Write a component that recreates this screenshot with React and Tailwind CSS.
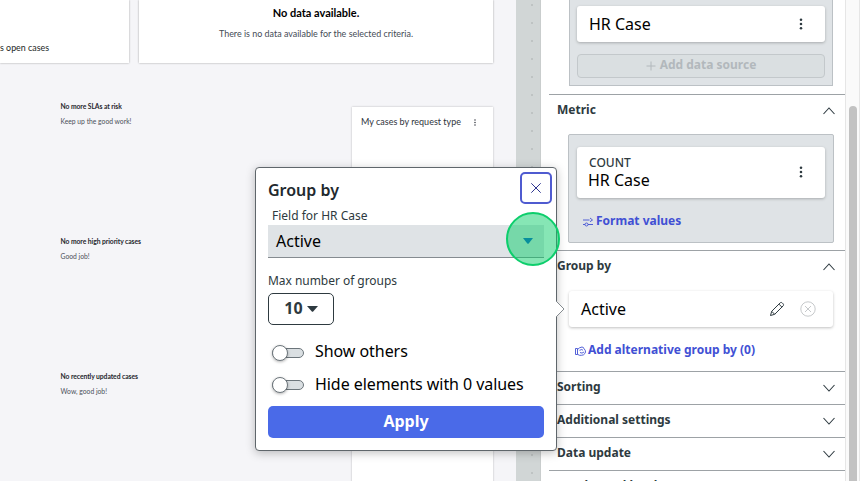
import React from "react";

const LATO = "font-[Lato,sans-serif]";

function Dots({ className }) {
  return (
    <svg viewBox="0 0 4 14" className={className} fill="currentColor">
      <circle cx="2" cy="2" r="1.5" />
      <circle cx="2" cy="7" r="1.5" />
      <circle cx="2" cy="12" r="1.5" />
    </svg>
  );
}

function Chevron({ up }) {
  return (
    <svg viewBox="0 0 12 8" className="h-2 w-3 shrink-0" fill="none" stroke="#2e3a40" strokeWidth="1.1">
      {up ? <path d="M.5 7 6 1l5.500 6" /> : <path d="M.5 1 6 7l5.500-6" />}
    </svg>
  );
}

function SectionHeader({ title, up }) {
  return (
    <div className="flex h-[33px] shrink-0 items-start justify-between border-t border-[#9da2a6] pl-2 pr-2.5">
      <span className="mt-1.5 text-[12px] leading-[17px] font-bold text-[#2e3a40]">{title}</span>
      <span className="mt-3 flex">
        <Chevron up={up} />
      </span>
    </div>
  );
}

function Message({ title, text }) {
  return (
    <div className="h-[135px] text-[6.75px] leading-[9px]">
      <p className="font-bold tracking-[-0.01em] text-[#25272d]">{title}</p>
      <p className="mt-1.5 text-[#4b4f59]">{text}</p>
    </div>
  );
}

function Dashboard() {
  return (
    <main className={"flex w-[516px] shrink-0 flex-col bg-[#f5f5f8] " + LATO}>
      <div className="flex h-[63px] shrink-0 gap-2.5">
        <section className="flex w-[129px] items-end bg-white pb-[9px] shadow-[0_0_2px_rgba(0,0,0,0.35)]">
          <p className="text-[8.900px] leading-3 text-[#1b1f24]">s open cases</p>
        </section>
        <section className="flex w-[354px] flex-col items-center bg-white shadow-[0_0_2px_rgba(0,0,0,0.35)]">
          <h2 className="mt-1.5 text-[11px] leading-[14px] font-bold text-black">No data available.</h2>
          <p className="mt-2 text-[8.950px] leading-3 text-[#454b55]">
            There is no data available for the selected criteria.
          </p>
        </section>
      </div>
      <div className="flex flex-1 justify-between pl-[60.500px] pr-[23px]">
        <div className="pt-[39px]">
          <Message title="No more SLAs at risk" text="Keep up the good work!" />
          <Message title="No more high priority cases" text="Good job!" />
          <Message title="No recently updated cases" text="Wow, good job!" />
        </div>
        <section className="mt-11 flex w-[141px] items-start justify-between bg-white pt-[9px] pl-[9px] pr-[17px] shadow-[0_0_2px_rgba(0,0,0,0.25)]">
          <h3 className="text-[9px] leading-3 text-[#30343c]">My cases by request type</h3>
          <Dots className="mt-[3px] h-[7px] w-0.5 text-[#30343c]" />
        </section>
      </div>
    </main>
  );
}

function Gutter() {
  return (
    <div className="flex w-[25px] shrink-0 flex-col items-center gap-4 border-r border-[#c9cdcd] bg-[#d1d6d6] pt-1 pl-[7px]">
      {Array.from({ length: 27 }, (_, i) => (
        <span key={i} className="size-0.5 shrink-0 rounded-full bg-[#b7bcbc]" />
      ))}
    </div>
  );
}

function Settings() {
  return (
    <aside className="flex w-[304px] shrink-0 flex-col bg-white pl-2">
      <div className="h-[94px] shrink-0 pl-5 pr-3">
        <div className="h-[86px] border border-t-0 border-[#bcc1c5] bg-[#dfe3e6] px-[7px] pt-1.5">
          <div className="flex h-9 items-center justify-between rounded-[3px] bg-white pr-[22px] pl-3 shadow-[0_1px_3px_rgba(0,0,0,0.25)]">
            <span className="text-[16px] leading-5 text-black">HR Case</span>
            <Dots className="h-3 w-1 text-[#2e3a40]" />
          </div>
          <div className="mt-3 flex h-6 items-center justify-center gap-1 rounded border border-[#c3c8cb] bg-[#dadfe1] text-[12px] font-bold text-[#b2b8bc]">
            <svg viewBox="0 0 10 10" className="size-2.5" stroke="currentColor" fill="none">
              <path d="M5 .5v9M.5 5h9" />
            </svg>
            <span className="-mt-0.5">Add data source</span>
          </div>
        </div>
      </div>

      <SectionHeader title="Metric" up />
      <div className="h-[123px] shrink-0 pt-[7px] pl-[19px] pr-[11px]">
        <div className="h-[109px] rounded-[2px] border border-[#bcc1c5] bg-[#dfe3e6] px-2 pt-3">
          <div className="flex h-[51px] items-center justify-between rounded-[3px] bg-white pr-[22px] pb-px pl-[11px] shadow-[0_1px_3px_rgba(0,0,0,0.25)]">
            <div>
              <p className="pl-px text-[12px] leading-4 font-medium text-[#2e3a40]">COUNT</p>
              <p className="-mt-px text-[16px] leading-5 text-black">HR Case</p>
            </div>
            <Dots className="h-3 w-1 text-[#2e3a40]" />
          </div>
          <div className="mt-3.5 flex items-center gap-[3px] pl-1.5 text-[12px] leading-[17px] font-bold text-[#4150d4]">
            <svg viewBox="0 0 10 10" className="mt-0.5 size-2.5" stroke="currentColor" fill="none" strokeWidth=".9">
              <path d="M0 3h6.500M0 7.500h2M5 7.500h5" />
              <path d="m7 1 2.500 2L7 4.700" />
              <circle cx="3.500" cy="7.500" r="1.500" />
            </svg>
            <span>Format values</span>
          </div>
        </div>
      </div>

      <SectionHeader title="Group by" up />
      <div className="h-[88px] shrink-0 pt-2 pl-5 pr-3">
        <div className="flex h-9 items-center rounded-[3px] bg-white pr-[17px] pl-3 shadow-[0_1px_3px_rgba(0,0,0,0.25)]">
          <span className="flex-1 text-[16px] leading-5 text-black">Active</span>
          <svg viewBox="0 0 16 16" className="size-4" fill="none" stroke="#2e3a40" strokeLinejoin="round">
            <path d="m1.500 14.500 1.200-4.200 8.400-8.400c.6-.6 1.500-.6 2.100 0l.9.9c.6.6.6 1.500 0 2.100l-8.400 8.400-4.200 1.200Z" />
            <path d="m9.900 3.100 3 3M2.700 10.300l3 3" />
          </svg>
          <svg viewBox="0 0 16 16" className="ml-[15px] size-4" fill="none" stroke="#c6c9cb">
            <circle cx="8" cy="8" r="7.200" />
            <path d="m5 5 6 6m0-6-6 6" />
          </svg>
        </div>
        <div className="mt-3.5 flex items-center gap-0.5 pl-1.5 text-[12px] leading-[17px] font-bold text-[#4150d4]">
          <svg viewBox="0 0 11 10" className="mt-0.5 h-2.5 w-[11px] shrink-0" fill="none" stroke="currentColor" strokeWidth=".9" strokeLinejoin="round">
            <path d="M.5 2.500h2v6h-2v-6ZM2.500 3.500 4.500 1.800 7 1l1.500.6.5 1.200 1.200 1.400.3 1.800-.6 1.500-1.400 1.300-2 .5H4.500l-2-1" />
            <path d="M4.500 4.300 6.800 3.500l1.200.8M5 6.500l2 .6L9 6" />
          </svg>
          <span className="whitespace-nowrap">Add alternative group by (0)</span>
        </div>
      </div>

      <SectionHeader title="Sorting" />
      <SectionHeader title="Additional settings" />
      <SectionHeader title="Data update" />
      <SectionHeader title="Header and border" />
    </aside>
  );
}

function Scrollbar() {
  return (
    <div className="w-[15px] shrink-0 border-x border-[#e6e6e6] bg-[#fafafa] pt-[106px] pl-[3px]">
      <div className="h-[400px] w-2 rounded-full bg-[#c2c2c2]" />
    </div>
  );
}

function Toggle({ label, className }) {
  return (
    <div className={"flex h-5 items-center pl-1 " + className}>
      <span className="mt-[3px] flex h-[10px] w-8 items-center rounded-full border border-[#6c757b] bg-[#dadfe2]">
        <span className="-ml-px size-4 rounded-full border border-[#6c757b] bg-white shadow-[0_1px_3px_rgba(0,0,0,0.3)]" />
      </span>
      <span className="ml-[11px] text-[16px] leading-5 tracking-[-0.06px] whitespace-nowrap text-black">{label}</span>
    </div>
  );
}

function GroupByDialog() {
  return (
    <div
      role="dialog"
      className="absolute top-[167px] left-[255px] h-[284px] w-[302px] rounded-[4px] border border-[#5f666b] bg-white px-3 shadow-[0_2px_10px_rgba(0,0,0,0.25)]"
    >
      <div className="flex h-9 items-start justify-between">
        <h1 className="mt-3 text-[16px] leading-5 font-semibold text-[#22292e]">Group by</h1>
        <button className="-mr-2 mt-1 flex size-8 shrink-0 items-center justify-center rounded-[5px] border-2 border-[#4f5bd0] bg-white">
          <svg viewBox="0 0 10 10" className="size-2.5" stroke="#2f3590" strokeWidth="1">
            <path d="m.3.3 9.400 9.400m0-9.400L.3 9.700" />
          </svg>
        </button>
      </div>
      <p className="mt-1 pl-1 text-[12px] leading-4 text-[#2e3a40]">Field for HR Case</p>
      <div className="mt-px flex h-[33px] items-center border-b border-[#858b90] bg-[#dfe3e6] pl-2 text-[16px] text-black">
        Active
      </div>
      <p className="mt-[15px] text-[12px] leading-4 tracking-[-0.04px] text-[#2e3a40]">Max number of groups</p>
      <button className="mt-1 flex h-8 w-[66px] items-center justify-center gap-1 rounded-[5px] border border-[#2e3a40] text-[16px] leading-5 font-bold text-[#2e3a40]">
        <span className="-mt-0.5">10</span>
        <svg viewBox="0 0 11 6" className="h-1.5 w-[11px]" fill="currentColor">
          <path d="M0 0h11L6.200 5.500q-.7.700-1.400 0Z" />
        </svg>
      </button>
      <Toggle label="Show others" className="mt-4" />
      <Toggle label="Hide elements with 0 values" className="mt-[12.500px]" />
      <button className="mt-[12.500px] flex h-8 w-full items-center justify-center rounded-[5px] bg-[#4a6ae8] pb-0.5 text-[16px] leading-5 font-bold text-white">
        Apply
      </button>
      <svg viewBox="0 0 10 18" className="absolute top-[132px] -right-[9px] h-[18px] w-2.5" fill="none">
        <path d="M0 1h1l8 8-8 8H0Z" fill="white" />
        <path d="m1 1 8 8-8 8" stroke="#858b90" />
      </svg>
      <div className="absolute top-[44px] left-[250px] flex size-[54px] items-center justify-center rounded-full border-2 border-[#0dce6c] bg-[#0dce6c]/50">
        <svg viewBox="0 0 10 6" className="mt-[3px] mr-2.5 h-1.5 w-2.5" fill="#078e9c">
          <path d="M0 0h10L5.700 5.500q-.7.700-1.400 0Z" />
        </svg>
      </div>
    </div>
  );
}

export default function App() {
  return (
    <div className="relative flex h-[481px] w-[860px] overflow-hidden bg-white font-['Noto_Sans',sans-serif]">
      <Dashboard />
      <Gutter />
      <Settings />
      <Scrollbar />
      <GroupByDialog />
    </div>
  );
}
